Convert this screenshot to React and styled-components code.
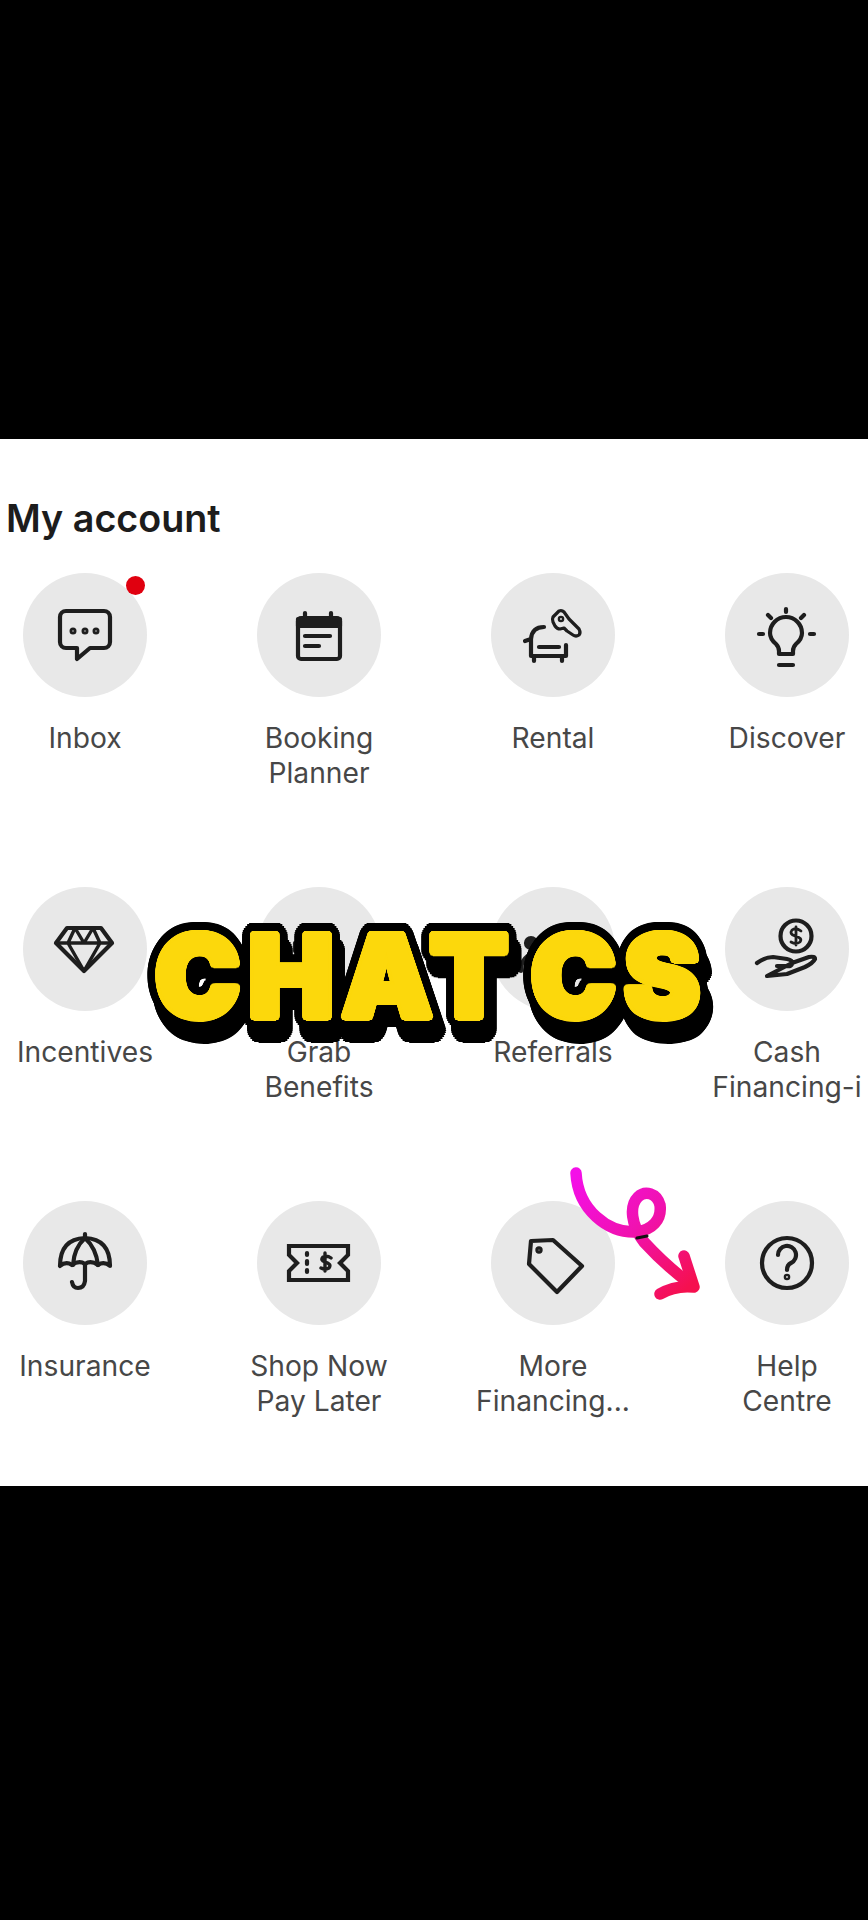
import React from "react";
import styled, { createGlobalStyle } from "styled-components";

const GlobalStyle = createGlobalStyle`
  html, body {
    margin: 0;
    padding: 0;
    background: #000;
  }
`;

// round outline built from shadows, text-stroke gives miter spikes on the A
function ring(radius, color) {
  const steps = [];
  for (let i = 0; i < 32; i++) {
    const a = (i / 32) * Math.PI * 2;
    steps.push(`${(Math.cos(a) * radius).toFixed(1)}px ${(Math.sin(a) * radius).toFixed(1)}px 0 ${color}`);
  }
  return steps.join(",");
}

const yellowEdge = [ring(3.5, "#fcd80c"), ring(1.8, "#fcd80c")].join(",");
const blackEdge = [ring(11.5, "#000"), ring(5.5, "#000")].join(",");

const Page = styled.div`
  position: relative;
  width: 868px;
  height: 1920px;
  overflow: hidden;
  background: #000;
  padding-top: 439px;
  box-sizing: border-box;
  font-family: Inter, "Liberation Sans", sans-serif;
`;

const Sheet = styled.section`
  height: 1047px;
  background: #fff;
  padding-top: 56px;
  box-sizing: border-box;
`;

const Title = styled.h2`
  margin: 0 0 31px 6px;
  font-size: 37.7px;
  line-height: 47px;
  font-weight: 600;
  color: #1c1c1c;
`;

const Grid = styled.div`
  display: grid;
  grid-template-columns: repeat(4, 170px);
  grid-auto-rows: 314px;
  column-gap: 64px;
  width: 872px;
`;

const Item = styled.div`
  display: flex;
  flex-direction: column;
  align-items: center;
`;

const Circle = styled.div`
  position: relative;
  width: 124px;
  height: 124px;
  border-radius: 50%;
  background: #e8e8e8;
  margin-bottom: 24px;
`;

const Dot = styled.span`
  position: absolute;
  top: 3px;
  right: 2px;
  width: 19px;
  height: 19px;
  border-radius: 50%;
  background: #e0000f;
`;

const Label = styled.div`
  width: 170px;
  text-align: center;
  font-size: 28.2px;
  line-height: 34.5px;
  font-weight: 400;
  color: #474747;
`;

const IconSvg = styled.svg`
  display: block;
  width: 124px;
  height: 124px;
  fill: none;
  stroke: #1e1e1e;
  stroke-width: 4.2;
  stroke-linecap: round;
  stroke-linejoin: round;
`;

const Caption = styled.div`
  position: absolute;
  left: 155px;
  top: 901px;
  font-family: Inter, "Liberation Sans", Arial, sans-serif;
  font-weight: 900;
  font-size: 114px;
  line-height: 150px;
  letter-spacing: 8px;
  word-spacing: -16px;
  white-space: nowrap;
  color: #fcd80c;
  text-shadow: ${yellowEdge};
  isolation: isolate;

  &::before,
  &::after {
    content: "CHAT CS";
    position: absolute;
    left: 0;
    top: 0;
    z-index: -1;
    color: #000;
    text-shadow: ${blackEdge};
  }

  &::after {
    left: 5px;
    top: 14px;
    z-index: -2;
  }
`;

const Arrow = styled.svg`
  position: absolute;
  left: 560px;
  top: 1160px;
  width: 150px;
  height: 150px;
  fill: none;
  stroke-linecap: round;
  stroke-linejoin: round;
`;

const icons = {
  inbox: (
    <>
      <path d="M43 38h38a6 6 0 0 1 6 6v25a6 6 0 0 1-6 6H67L54 86V75H43a6 6 0 0 1-6-6V44a6 6 0 0 1 6-6z" />
      <circle cx="50" cy="58" r="1.4" />
      <circle cx="62" cy="58" r="1.4" />
      <circle cx="73" cy="58" r="1.4" />
    </>
  ),
  calendar: (
    <>
      <rect x="41" y="45" width="42" height="41" rx="3" />
      <path d="M41 46h42v7H41z" fill="#1e1e1e" />
      <path d="M48 40v4M74 40v4M48 63h25M48 73h14" />
    </>
  ),
  rental: (
    <>
      <path d="M53 54q-12 0-13 12v17h35V72M34 68l6-2M48 74h20M43 83v5M71 83v5" />
      <path d="M62 44l6-6q3-1 5 1l5 7 10 10q2 4 0 6-3 2-6 0l-6-4-3-3-4 1q-3 0-5-3l-2-4q-1-3 0-5z" strokeWidth="3.2" />
      <circle cx="70" cy="46" r="1.2" />
    </>
  ),
  discover: (
    <>
      <path d="M54 81v-3q0-4-3-7-6-5-6-11a16 16 0 0 1 32 0q0 6-6 11-3 3-3 7v3z" />
      <path d="M54 92h14M61 36v3M43 42l3 3M79 42l-3 3M34 61h4M85 61h4" />
    </>
  ),
  incentives: (
    <>
      <path d="M44 41h34l11 15-28 28-28-28z" />
      <path d="M33 56h56M52 41l-7 15 16 28 16-28-7-15M52 41l9 15 9-15" strokeWidth="3.4" />
    </>
  ),
  benefits: (
    <>
      <path d="M38 56h46v8H38zM42 64v22h38V64M61 56v30" />
      <path d="M61 56q-14-2-12-12 5-6 12 12 7-18 12-12 2 10-12 12z" />
    </>
  ),
  referrals: (
    <>
      <circle cx="40" cy="56" r="5" fill="#1e1e1e" />
      <circle cx="78" cy="56" r="7" />
      <path d="M30 84q0-16 16-18M64 86q0-16 14-16t14 16z" />
    </>
  ),
  cash: (
    <>
      <circle cx="71" cy="49" r="15.5" />
      <path d="M76 44q-5-4-9-1-3 4 3 6 8 2 5 6-4 3-9 0M71 40v18" strokeWidth="2.8" />
      <path d="M32 76q8-6 16-6l14 2q6 1 5 5-1 3-7 2h-8M67 76l17-6q6-1 6 2-2 4-10 8l-18 7-20 2z" />
    </>
  ),
  insurance: (
    <>
      <path d="M62 33v4M37 65q0-27 25-28 25 1 25 28-6-5-12-1-7-5-13-1-6-4-13 1-6-4-12 1z" />
      <path d="M62 37q-11 10-12 27M62 37q11 10 13 27M62 64v16q-1 7-7 7-5 0-6-6" />
    </>
  ),
  paylater: (
    <>
      <path d="M32 45h59v9l-8 8 8 8v9H32v-9l8-8-8-8z" strokeLinejoin="miter" />
      <path d="M50 52v2M50 60v3M50 69v2" />
      <path d="M74 57q-4-3-8-1-3 3 2 5 7 2 4 6-4 2-8 0M68 52v18" strokeWidth="3.4" />
    </>
  ),
  financing: (
    <>
      <path d="M40 40l22-1 29 26-25 26-28-28z" />
      <circle cx="48" cy="49" r="1.6" />
    </>
  ),
  help: (
    <>
      <circle cx="62" cy="62" r="25" />
      <path d="M53 54a9 9 0 1 1 13 8q-4 2-4 7" />
      <circle cx="62" cy="76" r="1.2" />
    </>
  ),
};

const accountItems = [
  { icon: "inbox", label: ["Inbox"], badge: true },
  { icon: "calendar", label: ["Booking", "Planner"] },
  { icon: "rental", label: ["Rental"] },
  { icon: "discover", label: ["Discover"] },
  { icon: "incentives", label: ["Incentives"] },
  { icon: "benefits", label: ["Grab", "Benefits"] },
  { icon: "referrals", label: ["Referrals"] },
  { icon: "cash", label: ["Cash", "Financing-i"] },
  { icon: "insurance", label: ["Insurance"] },
  { icon: "paylater", label: ["Shop Now", "Pay Later"] },
  { icon: "financing", label: ["More", "Financing..."] },
  { icon: "help", label: ["Help", "Centre"] },
];

function AccountItem({ data }) {
  return (
    <Item>
      <Circle>
        <IconSvg viewBox="0 0 124 124">{icons[data.icon]}</IconSvg>
        {data.badge && <Dot />}
      </Circle>
      <Label>
        {data.label.map((line) => (
          <div key={line}>{line}</div>
        ))}
      </Label>
    </Item>
  );
}

export default function App() {
  return (
    <Page>
      <GlobalStyle />
      <Sheet>
        <Title>My account</Title>
        <Grid>
          {accountItems.map((item) => (
            <AccountItem key={item.icon} data={item} />
          ))}
        </Grid>
      </Sheet>
      <Caption>CHAT CS</Caption>
      <Arrow viewBox="0 0 150 150">
        <defs>
          <linearGradient id="arrowInk" gradientUnits="userSpaceOnUse" x1="20" y1="10" x2="125" y2="130">
            <stop offset="0" stopColor="#f40fe8" />
            <stop offset="0.5" stopColor="#f012b0" />
            <stop offset="1" stopColor="#f5104f" />
          </linearGradient>
        </defs>
        <path
          d="M16 13C18 50 48 73 76 72C92 70 102 60 100 45C97 33 85 30 78 37C69 46 71 65 84 82Q108 108 132 125"
          stroke="url(#arrowInk)"
          strokeWidth="11.5"
        />
        <path d="M124 96L134 127Q115 125 100 134" stroke="url(#arrowInk)" strokeWidth="11.5" />
        <path d="M77 78L87 76" stroke="#111" strokeWidth="3" />
      </Arrow>
    </Page>
  );
}
